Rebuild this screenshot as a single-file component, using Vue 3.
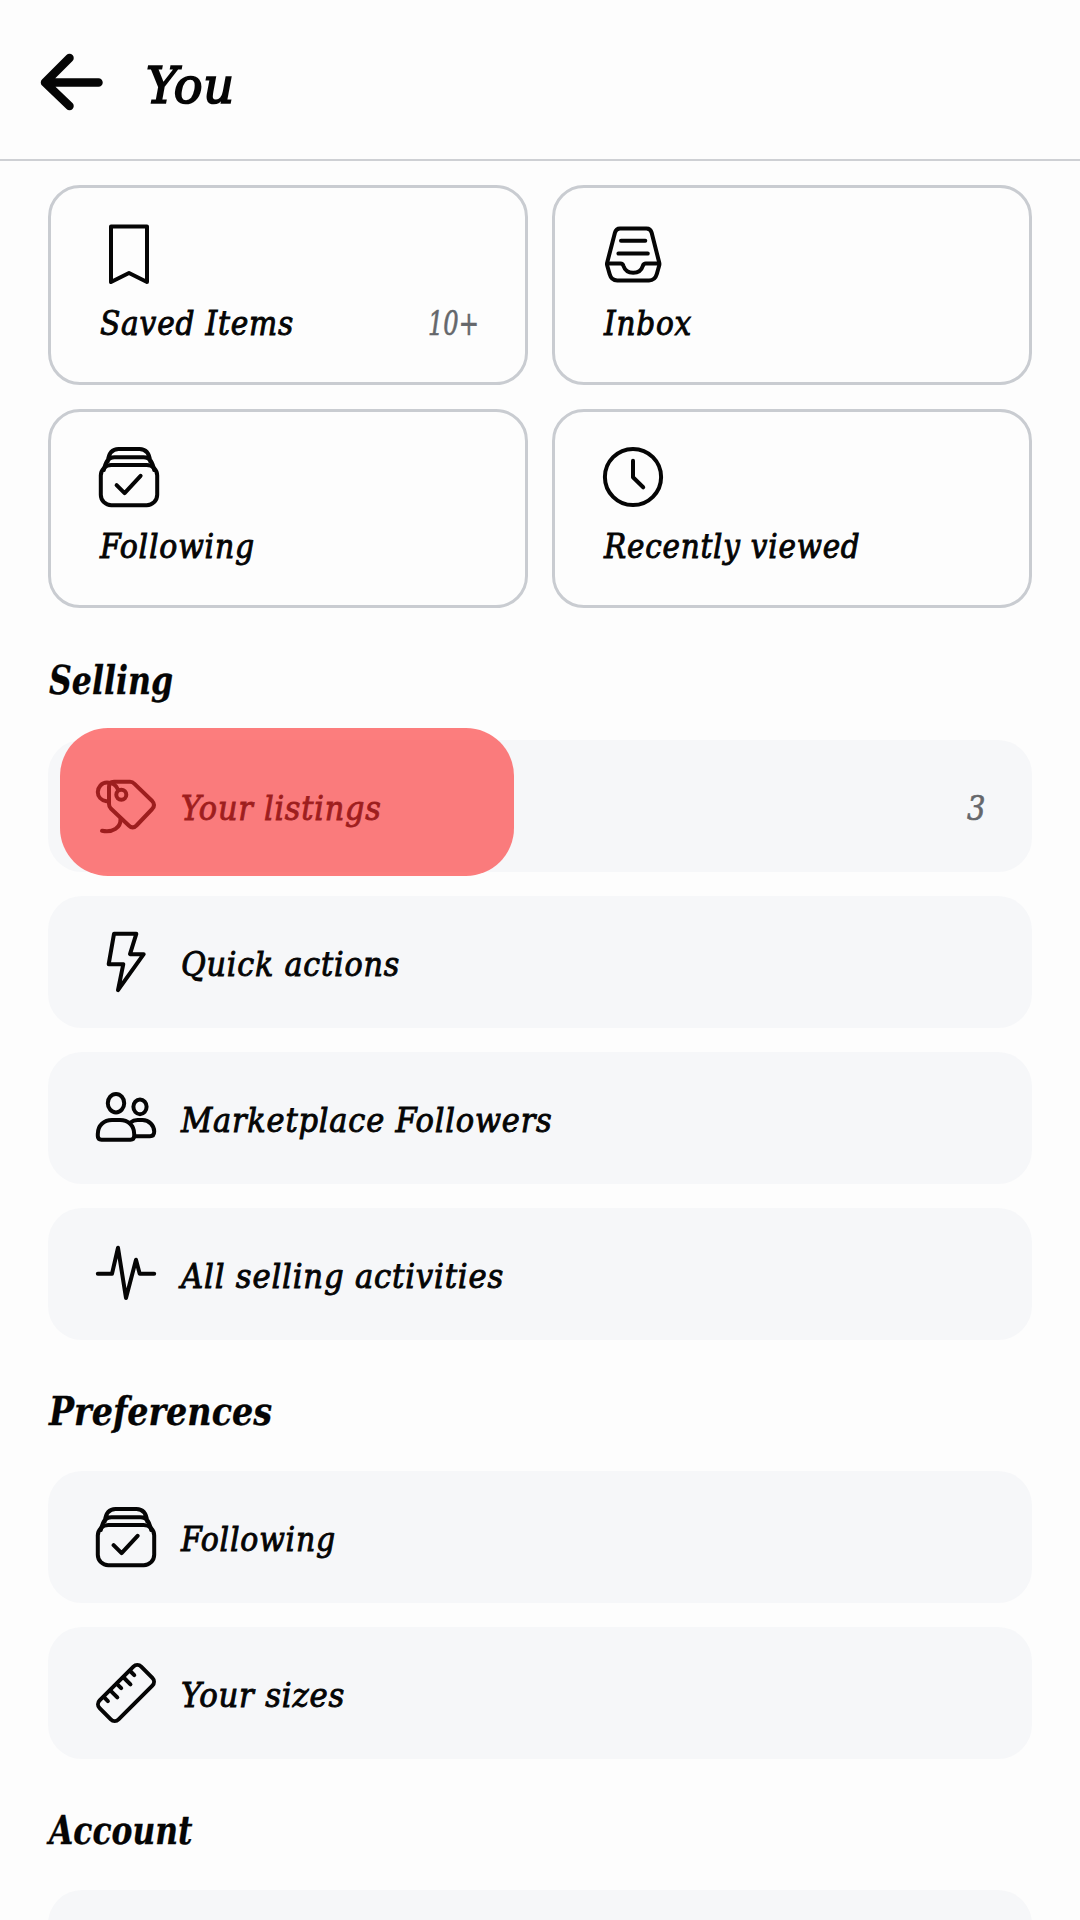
<script setup>
import { h } from 'vue'

const icons = {
  bookmark: '<path d="M12 2.6H48V58L30 49 12 58Z"/>',
  inbox:
    '<path d="M17 4.4H43.5Q47.6 4.4 48.6 8.5L56.2 38.5Q56.6 40 56.2 41.5L53.8 50Q52 56.4 46 56.4H14.3Q8.3 56.4 6.6 50L4.2 41.5Q3.8 40 4.2 38.5L12 8.5Q13 4.4 17 4.4Z"/><path d="M18 16.7H42.3M15.4 29.6H44.8M4.5 39.6H17.5Q19.8 39.6 20.5 42C22 46.6 25.6 48.8 30.2 48.8S38.4 46.6 39.8 42Q40.6 39.6 42.8 39.6H56"/>',
  following:
    '<rect x="1.8" y="18" width="56.4" height="40.2" rx="10.5"/><path d="M4.8 23C6.5 16 8.5 10.2 15.5 10.2H44.5C51.5 10.2 53.5 16 55.2 23M8.8 14.5C9.6 7 12.5 2 19.5 2H40.5C47.5 2 50.4 7 51.2 14.5M17.6 38.2L25.6 46.2 41.6 28.8"/>',
  clock: '<circle cx="30" cy="30" r="28.1"/><path d="M30 13.8V30.3L40.2 40.3"/>',
  tag:
    '<path d="M18 5.8H34Q36.5 5.8 38.5 7.8L56.2 25Q59.8 29 56.2 33L40.5 49.5Q36.7 53.2 32.8 49.5L14.8 32.5Q13 30.5 13 28V11Q13 5.8 18 5.8Z"/><circle cx="25.3" cy="18.8" r="5"/><path d="M10.5 25.3C5 24.5 1.8 20.5 1.8 16S5.5 6.6 11 6.6C17.5 6.6 20.5 9.5 22.2 14M24.5 43C24.8 51.5 17 57 6 54.8"/>',
  bolt: '<path d="M18 1.8H40.3L34 22.2H47.7L22 58.2 27.3 32.2H12.7Z"/>',
  people:
    '<ellipse cx="20" cy="15.2" rx="8.2" ry="9.2"/><ellipse cx="44" cy="18.8" rx="6.6" ry="7.4"/><path d="M1.8 46C1.8 37.5 8 32 16 32H24C32 32 38.2 37.5 38.2 46V48Q38.2 51.7 34.5 51.7H5.5Q1.8 51.7 1.8 48Z"/><path d="M34.5 34.5Q37.5 32 41.5 32H46.5C53 32 58.2 37.5 58.2 43.5Q58.2 48.2 54 48.2H39"/>',
  pulse: '<path d="M1.8 29.8H16L22 3.8 30 54 40 15.8 43.7 29.8H58.2"/>',
  ruler:
    '<g transform="rotate(-45 30 30)"><rect x=".6" y="16.6" width="58.8" height="26.8" rx="5.5"/><path d="M11.5 17V22.9M20.7 17V27M30 17V23.2M39.3 17V27M48.5 17V23.2"/></g>',
}

const cards = [
  { icon: 'bookmark', label: 'Saved Items', w: 194, count: '10+' },
  { icon: 'inbox', label: 'Inbox', w: 88 },
  { icon: 'following', label: 'Following', w: 155 },
  { icon: 'clock', label: 'Recently viewed', w: 256.5 },
]

const sections = [
  {
    title: 'Selling',
    w: 124,
    rows: [
      { icon: 'tag', label: 'Your listings', w: 200.5, count: '3', selected: true },
      { icon: 'bolt', label: 'Quick actions', w: 219 },
      { icon: 'people', label: 'Marketplace Followers', w: 371.5 },
      { icon: 'pulse', label: 'All selling activities', w: 323 },
    ],
  },
  {
    title: 'Preferences',
    w: 223,
    rows: [
      { icon: 'following', label: 'Following', w: 155 },
      { icon: 'ruler', label: 'Your sizes', w: 164 },
    ],
  },
  { title: 'Account', w: 143.5, rows: [{ label: '' }] },
]

// Condensed label: one line of text fitted to a given advance width.
const Label = (props) =>
  h('svg', { class: 'label', width: props.w, height: 44 }, [
    h('text', { x: 1, y: 32, textLength: props.w, lengthAdjust: 'spacingAndGlyphs' }, props.text),
  ])
Label.props = ['text', 'w']
</script>

<template>
  <div class="screen">
    <header class="top">
      <svg class="back" width="64" height="60" viewBox="0 0 64 60">
        <path d="M29.5 6L5 30.5 29.5 54M6 30.5H58.5" />
      </svg>
      <Label class="title" text="You" :w="89" />
    </header>

    <main>
      <div class="cards">
        <div v-for="c in cards" :key="c.label" class="card">
          <svg class="icon" viewBox="0 0 60 60" v-html="icons[c.icon]"></svg>
          <div class="line">
            <Label :text="c.label" :w="c.w" />
            <Label v-if="c.count" class="count" :text="c.count" :w="51" />
          </div>
        </div>
      </div>

      <section v-for="s in sections" :key="s.title">
        <h2><Label :text="s.title" :w="s.w" /></h2>
        <div class="rows">
          <div v-for="r in s.rows" :key="r.label" class="row">
            <template v-if="r.label">
              <svg class="icon" viewBox="0 0 60 60" v-html="icons[r.icon]"></svg>
              <Label :text="r.label" :w="r.w" />
              <Label v-if="r.count" class="count" :text="r.count" :w="18.5" />
            </template>
            <div v-if="r.selected" class="highlight"></div>
          </div>
        </div>
      </section>
    </main>
  </div>
</template>

<style>
body {
  background: #fdfdfd;
}
.label {
  display: block;
  flex: none;
  overflow: visible;
}
.label text {
  font-family: "DejaVu Serif Condensed", "DejaVu Serif", serif;
  font-stretch: condensed;
  font-style: italic;
  font-size: 34px;
  letter-spacing: 0.8px;
  fill: #050505;
  stroke: #050505;
  stroke-width: 0.9px;
}
.label.title text {
  font-size: 50px;
  stroke-width: 1.7px;
}
.label.count text {
  fill: #65676b;
  stroke: #65676b;
  letter-spacing: 0;
  stroke-width: 0.6px;
}
h2 .label text {
  font-size: 39.5px;
  font-weight: bold;
  letter-spacing: 0;
  stroke-width: 0.3px;
}
</style>

<style scoped>
.screen {
  width: 1080px;
  height: 1920px;
  overflow: hidden;
  background: #fdfdfd;
}
.top {
  box-sizing: border-box;
  height: 161px;
  padding: 52px 0 0 40px;
  border-bottom: 2px solid #ced0d4;
  display: flex;
  align-items: flex-start;
}
.back {
  fill: none;
  stroke: #050505;
  stroke-width: 8.5;
  stroke-linecap: round;
  stroke-linejoin: round;
}
.title {
  margin: 18.5px 0 0 41px;
}
main {
  padding: 24px 48px 0;
}
.cards {
  display: grid;
  grid-template-columns: 480px 480px;
  gap: 24px;
  margin-bottom: 1px;
}
.card {
  box-sizing: border-box;
  height: 199.5px;
  padding: 35.5px 47px 0 48px;
  border: 3px solid #c9ccd1;
  border-radius: 32px;
}
.line {
  display: flex;
  justify-content: space-between;
  margin-top: 19px;
}
.icon {
  display: block;
  flex: none;
  width: 60px;
  height: 60px;
  overflow: visible;
  fill: none;
  stroke: #050505;
  stroke-width: 4;
  stroke-linecap: round;
  stroke-linejoin: round;
}
h2 {
  height: 131px;
  margin: 0;
  padding-top: 52.5px;
  box-sizing: border-box;
}
.rows {
  display: flex;
  flex-direction: column;
  gap: 24px;
}
.row {
  position: relative;
  box-sizing: border-box;
  height: 132px;
  padding: 0 48px;
  border-radius: 34px;
  background: #f6f7f9;
  display: flex;
  align-items: center;
}
.row .icon {
  margin: 0 24px 0 0;
}
.row .label {
  margin-top: 8px;
}
.row .count {
  margin-left: auto;
}
.highlight {
  position: absolute;
  left: 12px;
  top: -12px;
  width: 454px;
  height: 148px;
  border-radius: 48px;
  background: rgba(252, 47, 47, 0.62);
}
</style>
